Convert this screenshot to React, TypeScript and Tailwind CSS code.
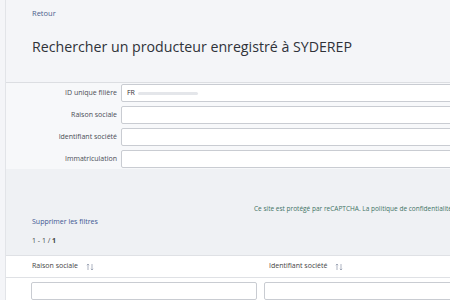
const fields = [
  { label: "ID unique filière", value: "FR" },
  { label: "Raison sociale", value: "" },
  { label: "Identifiant société", value: "" },
  { label: "Immatriculation", value: "" },
];

function SortIcon() {
  return (
    <svg width="8" height="8" viewBox="0 0 8 8" className="ml-2 text-[#8a93a6]">
      <path d="M2 7V1M0.8 2.2L2 1l1.2 1.2M6 1v6M4.8 5.8L6 7l1.2-1.2" stroke="currentColor" strokeWidth="0.7" fill="none" />
    </svg>
  );
}

export default function App() {
  return (
    <div className="h-[300px] w-[450px] overflow-hidden bg-[#f4f5f8] font-['Open_Sans',sans-serif]">
      <div className="ml-[5px] w-[640px] h-full border-l border-[#e2e4e8]">
        {/* Header */}
        <div className="pl-[26px] pt-[8px] h-[83px] border-b border-[#dcdee2]">
          <a className="block text-[7.5px] leading-[10px] text-[#4b5d8c]">Retour</a>
          <h1 className="mt-[18px] text-[14.2px] leading-[22px] text-[#2f3238]">
            Rechercher un producteur enregistré à SYDEREP
          </h1>
        </div>

        {/* Form */}
        <div className="bg-[#f7f8fa] pt-[1px] pb-[1px] flex flex-col gap-[4px]">
          {fields.map((f) => (
            <div key={f.label} className="flex items-center">
              <label className="w-[115px] pr-[4px] text-right text-[7px] leading-[10px] text-[#4a4d55]">
                {f.label}
              </label>
              <div className="h-[18px] flex-1 bg-white border border-[#c9ccd2] rounded-[2px] flex items-center px-[5px] text-[7px] text-[#333]">
                {f.value && (
                  <>
                    {f.value}
                    <span className="ml-[3px] h-[3px] w-[60px] rounded bg-[#e4e6ea]" />
                  </>
                )}
              </div>
            </div>
          ))}
        </div>

        {/* Footer area */}
        <div className="bg-[#eff1f4] pt-[35px] pl-[26px]">
          <p className="ml-[222px] text-[6.5px] leading-[10px] text-[#3f7466] whitespace-nowrap">
            Ce site est protégé par reCAPTCHA. La politique de confidentialité et les conditions d'utilisation de Google s'appliquent.
          </p>
          <a className="block mt-[3px] text-[7px] leading-[10px] text-[#3d5793]">Supprimer les filtres</a>
          <div className="mt-[9px] pb-[9px] text-[7px] leading-[10px] text-[#444]">
            1 - 1 / <span className="font-bold">1</span>
          </div>
        </div>

        {/* Table */}
        <div className="bg-white border-t border-[#dfe1e5]">
          <div className="h-[22px] flex items-center border-b border-[#dfe1e5] text-[7px] text-[#444]">
            <div className="w-[263px] pl-[26px] flex items-center">
              Raison sociale <SortIcon />
            </div>
            <div className="flex items-center">
              Identifiant société <SortIcon />
            </div>
          </div>
          <div className="flex gap-[7px] pl-[25px] pt-[4px]">
            <div className="h-[18px] w-[226px] border border-[#c9ccd2] rounded-[2px]" />
            <div className="h-[18px] w-[226px] border border-[#c9ccd2] rounded-[2px]" />
          </div>
        </div>
      </div>
    </div>
  );
}
